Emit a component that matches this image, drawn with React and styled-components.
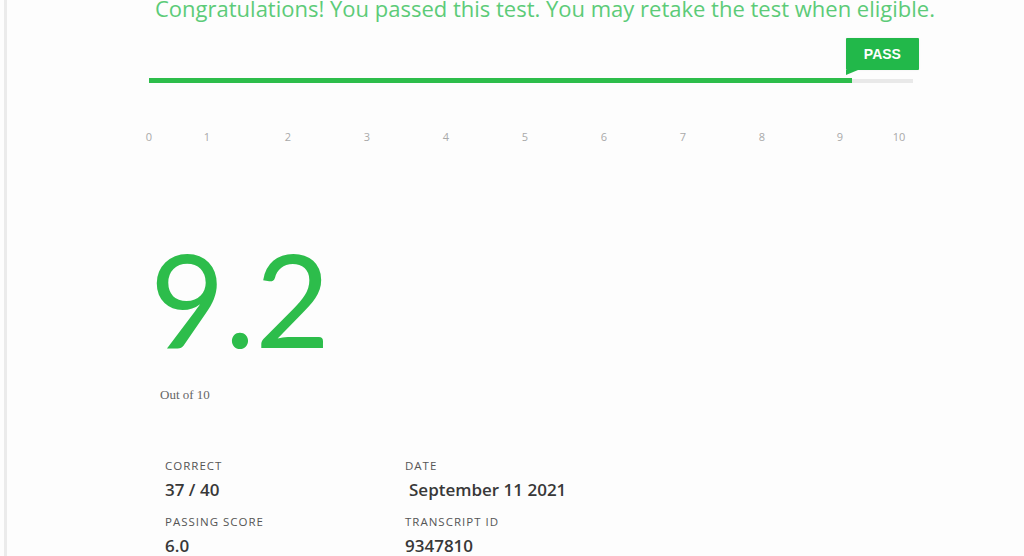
import React from "react";
import styled, { createGlobalStyle } from "styled-components";

const GlobalStyle = createGlobalStyle`
  html, body {
    margin: 0;
    padding: 0;
    background: #fdfdfd;
    font-family: "Open Sans", "Noto Sans", sans-serif;
  }
`;

const ticks = [
  { label: "0", gap: 0 },
  { label: "1", gap: 58 },
  { label: "2", gap: 81 },
  { label: "3", gap: 79 },
  { label: "4", gap: 79 },
  { label: "5", gap: 79 },
  { label: "6", gap: 79 },
  { label: "7", gap: 79 },
  { label: "8", gap: 79 },
  { label: "9", gap: 78 },
  { label: "10", gap: 59 },
];

const score = 9.2;

const App = () => {
  return (
    <>
      <GlobalStyle />
      <Page>
        <Content>
          <Headline>
            Congratulations! You passed this test. You may retake the test when eligible.
          </Headline>

          <Track>
            <Fill style={{ width: `${(score / 10) * 100}%` }} />
            <Badge style={{ left: `calc(${(score / 10) * 100}% - 6px)` }}>PASS</Badge>
          </Track>

          <Scale>
            {ticks.map((t) => (
              <Tick key={t.label} $gap={t.gap}>
                <span>{t.label}</span>
              </Tick>
            ))}
          </Scale>

          <Score>9.2</Score>
          <OutOf>Out of 10</OutOf>

          <Stats>
            <Stat>
              <StatLabel>Correct</StatLabel>
              <StatValue>37 / 40</StatValue>
            </Stat>
            <Stat>
              <StatLabel>Date</StatLabel>
              <StatValue $indent>September 11 2021</StatValue>
            </Stat>
            <Stat>
              <StatLabel>Passing Score</StatLabel>
              <StatValue>6.0</StatValue>
            </Stat>
            <Stat>
              <StatLabel>Transcript ID</StatLabel>
              <StatValue>9347810</StatValue>
            </Stat>
          </Stats>
        </Content>
      </Page>
    </>
  );
};

export default App;

const Page = styled.div`
  width: 1024px;
  height: 556px;
  overflow: hidden;
  padding-left: 4px;
  box-sizing: border-box;
`;

const Content = styled.div`
  height: 100%;
  border-left: 3px solid #ebebeb;
  padding-left: 142px;
  display: flex;
  flex-direction: column;
`;

const Headline = styled.div`
  margin: 0 0 0 6px;
  font-size: 22px;
  line-height: 16px;
  color: #5ccb78;
  white-space: nowrap;
`;

const Track = styled.div`
  position: relative;
  margin-top: 63px;
  width: 764px;
  height: 4px;
  background: #e9e9e9;
`;

const Fill = styled.div`
  height: 5px;
  margin-top: -1px;
  background: #2dbd4b;
`;

const Badge = styled.div`
  position: absolute;
  bottom: 13px;
  width: 73px;
  height: 32px;
  background: #22b84a;
  color: #fff;
  font-family: "Liberation Sans", Arial, sans-serif;
  font-weight: 700;
  font-size: 14px;
  display: flex;
  align-items: center;
  justify-content: center;
  border-radius: 1px;
  box-shadow: 0 0 2px rgba(0, 0, 0, 0.08);

  &::after {
    content: "";
    position: absolute;
    left: 0;
    bottom: -5px;
    border-left: 12px solid #22b84a;
    border-bottom: 5px solid transparent;
  }
`;

const Scale = styled.div`
  display: flex;
  margin-top: 47px;
  height: 14px;
`;

const Tick = styled.div`
  width: 0;
  margin-left: ${(p) => p.$gap}px;
  display: flex;
  justify-content: center;
  font-size: 11px;
  line-height: 14px;
  color: #a9a9a9;

  span {
    white-space: nowrap;
  }
`;

const Score = styled.div`
  margin: 90px 0 0 1px;
  font-family: "Lato", "Noto Sans", sans-serif;
  font-size: 129px;
  line-height: 129px;
  font-weight: 400;
  color: #2dbd4b;
  letter-spacing: 0;
`;

const OutOf = styled.div`
  margin: 24px 0 0 11px;
  font-family: "Liberation Serif", "Times New Roman", serif;
  font-size: 13px;
  color: #666;
`;

const Stats = styled.div`
  margin: 56px 0 0 16px;
  display: grid;
  grid-template-columns: 240px 240px;
  row-gap: 14px;
`;

const Stat = styled.div`
  display: flex;
  flex-direction: column;
  gap: 6px;
`;

const StatLabel = styled.div`
  font-size: 11.5px;
  line-height: 14px;
  text-transform: uppercase;
  letter-spacing: 1px;
  color: #555;
`;

const StatValue = styled.div`
  font-size: 17px;
  line-height: 22px;
  font-weight: 600;
  color: #383838;
  padding-left: ${(p) => (p.$indent ? "4px" : "0")};
`;
